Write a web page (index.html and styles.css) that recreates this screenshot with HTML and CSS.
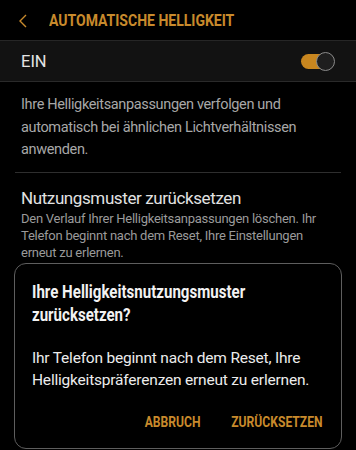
FILE: index.html
```html
<!DOCTYPE html>
<html lang="de">
<head>
<meta charset="utf-8">
<link rel="stylesheet" href="styles.css">
</head>
<body>
<div class="screen">
  <header class="appbar">
    <svg class="back" width="10" height="14" viewBox="0 0 10 14"><path d="M8 1 L2 7 L8 13" fill="none" stroke="#c88a2c" stroke-width="1.4"/></svg>
    <h1 class="title"><span>AUTOMATISCHE HELLIGKEIT</span></h1>
  </header>
  <div class="switch-row">
    <span class="switch-label">EIN</span>
    <span class="toggle"><span class="knob"></span></span>
  </div>
  <p class="desc">Ihre Helligkeitsanpassungen verfolgen und automatisch bei ähnlichen Lichtverhältnissen anwenden.</p>
  <div class="divider"></div>
  <div class="item">
    <div class="item-title">Nutzungsmuster zurücksetzen</div>
    <div class="item-sub">Den Verlauf Ihrer Helligkeitsanpassungen löschen. Ihr Telefon beginnt nach dem Reset, Ihre Einstellungen erneut zu erlernen.</div>
  </div>
  <div class="dialog">
    <h2 class="dialog-title"><span>Ihre Helligkeitsnutzungsmuster<br>zurücksetzen?</span></h2>
    <p class="dialog-body">Ihr Telefon beginnt nach dem Reset, Ihre Helligkeitspräferenzen erneut zu erlernen.</p>
    <div class="actions">
      <span class="btn">ABBRUCH</span>
      <span class="btn">ZURÜCKSETZEN</span>
    </div>
  </div>
</div>
</body>
</html>
```

FILE: styles.css
```css
html, body {
  margin: 0;
  padding: 0;
  background: #000;
}
.screen {
  width: 356px;
  height: 450px;
  overflow: hidden;
  background: #000;
  font-family: Roboto, "Noto Sans", sans-serif;
  color: #e0e0e0;
}
.appbar {
  height: 41px;
  display: flex;
  align-items: center;
  padding-left: 18px;
  border-bottom: 1px solid #262626;
  box-sizing: border-box;
}
.back {
  display: block;
  margin-top: 1px;
}
.title {
  margin: 0 0 0 21px;
  font-size: 16px;
  font-weight: 700;
  color: #c88a2c;
  white-space: nowrap;
}
.title span {
  display: inline-block;
  transform: scaleX(0.875);
  transform-origin: left center;
}
.switch-row {
  height: 41px;
  box-sizing: border-box;
  background: #121212;
  border-bottom: 1px solid #2a2a2a;
  display: flex;
  align-items: center;
  justify-content: space-between;
  padding: 0 22px 0 21px;
}
.switch-label {
  font-size: 16.5px;
  color: #e4e4e4;
}
.toggle {
  position: relative;
  width: 33px;
  height: 15px;
  border-radius: 8px;
  background: #c8861f;
}
.knob {
  position: absolute;
  right: -1px;
  top: -2px;
  width: 17px;
  height: 17px;
  border-radius: 50%;
  background: #1e1e1e;
  border: 1px solid #8a8a8a;
}
.desc {
  margin: 0;
  padding: 12px 21px 10px;
  font-size: 14.5px;
  letter-spacing: -0.35px;
  line-height: 22.5px;
  color: #a8a8a8;
}
.divider {
  height: 1px;
  margin: 0 15px;
  background: #2e2e2e;
}
.item {
  padding: 15px 21px 0;
}
.item-title {
  font-size: 17px;
  letter-spacing: -0.4px;
  line-height: 20px;
  color: #e2e2e2;
}
.item-sub {
  margin-top: 2px;
  font-size: 13px;
  letter-spacing: -0.25px;
  line-height: 17px;
  color: #9a9a9a;
}
.dialog {
  margin: 2px 14px 0;
  height: 186px;
  box-sizing: border-box;
  border: 1px solid #5e5e5e;
  border-radius: 12px;
  padding: 16px 17px 0;
}
.dialog-title {
  margin: 0;
  font-size: 18px;
  line-height: 23px;
  font-weight: 700;
  color: #f2f2f2;
  white-space: nowrap;
}
.dialog-title span {
  display: inline-block;
  transform: scaleX(0.837);
  transform-origin: left center;
}
.dialog-body {
  margin: 21px 0 0;
  font-size: 15.5px;
  letter-spacing: -0.2px;
  line-height: 22px;
  color: #ececec;
}
.actions {
  display: flex;
  justify-content: flex-end;
  gap: 17px;
  margin-top: 23px;
  padding-right: 1px;
}
.btn {
  display: inline-block;
  font-size: 14px;
  font-weight: 700;
  color: #c88a2c;
  transform: scaleX(0.865);
  transform-origin: right center;
}
```
